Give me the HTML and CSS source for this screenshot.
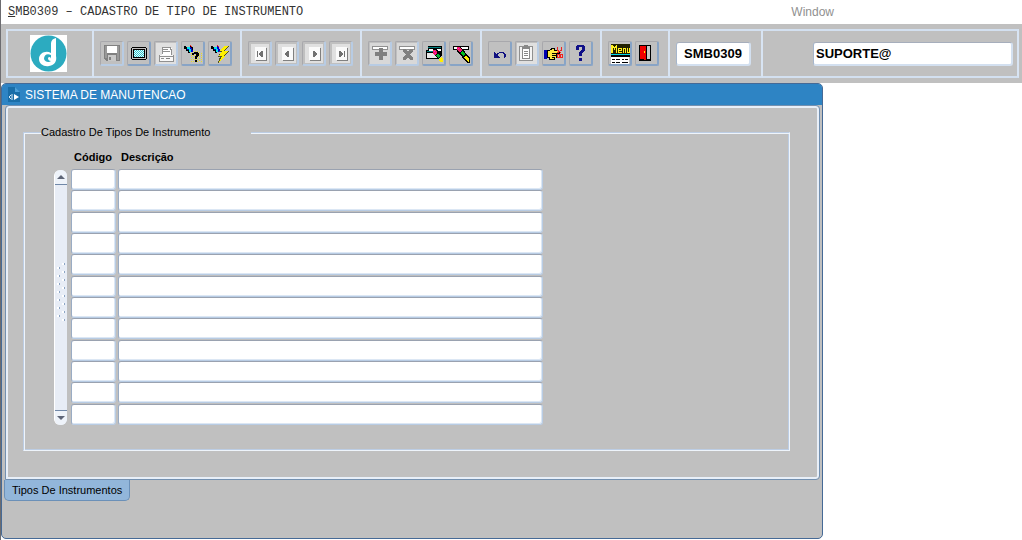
FILE: index.html
```html
<!DOCTYPE html>
<html lang="pt-BR">
<head>
	<meta charset="UTF-8">
	<title>SMB0309 – CADASTRO DE TIPO DE INSTRUMENTO</title>
	<link rel="stylesheet" href="styles.css">
</head>
<body>
	<div id="app">
		<div id="menubar">
			<h1><u>S</u>MB0309 – CADASTRO DE TIPO DE INSTRUMENTO</h1>
			<a href="#" class="menu-window">Window</a>
		</div>

		<div id="toolbar">
			<div class="group logo">
				<svg width="37" height="37" viewBox="0 0 37 37">
					<rect width="37" height="37" fill="#fff"/>
					<circle cx="18.500" cy="18.500" r="18" fill="#2cabc0"/>
					<path d="M26 3C22 4 21 6 21 10V18C16 15 9 18 9 24C9 29 14 32 19 31C25 30 27 26 26 21Z" fill="#fff"/>
					<path d="M21 20C17 18 14 20 14 24C15 27 19 28 21 26C19 26 18 25 18 23C19 21 21 22 21 24Z" fill="#2cabc0"/>
				</svg>
			</div>
			<div class="group">
				<button type="button" class="off" title="Salvar"><svg viewBox="2 2 20 21">
					<path d="M4 4H20V20H6L4 18Z" fill="#808080"/>
					<path d="M5 5h2v12h-2zM17 5h2v14h-2z" fill="#999"/>
					<path d="M7 5H17V12H7Z" fill="#fff"/>
					<path d="M8 14H16V20H8Z" fill="#c8c8c8"/>
					<path d="M9 16h2v3h-2z" fill="#808080"/>
				</svg></button>
				<button type="button" title="Tela"><svg viewBox="2 2 20 21">
					<path d="M5 6H19V7H20V18H19V19H5V18H4V7H5Z" fill="#000"/>
					<path d="M5 7H19V18H5Z" fill="#c0c0c0"/>
					<path d="M6 8H18V17H6Z" fill="#000"/>
					<path d="M7 9H17V16H7Z" fill="#e8ffff"/>
					<path d="M7 9h1v1h-1zM9 9h1v1h-1zM11 9h1v1h-1zM13 9h1v1h-1zM15 9h1v1h-1zM8 10h1v1h-1zM10 10h1v1h-1zM12 10h1v1h-1zM14 10h1v1h-1zM16 10h1v1h-1zM7 11h1v1h-1zM9 11h1v1h-1zM11 11h1v1h-1zM13 11h1v1h-1zM15 11h1v1h-1zM8 12h1v1h-1zM10 12h1v1h-1zM12 12h1v1h-1zM14 12h1v1h-1zM16 12h1v1h-1zM7 13h1v1h-1zM9 13h1v1h-1zM11 13h1v1h-1zM13 13h1v1h-1zM15 13h1v1h-1zM8 14h1v1h-1zM10 14h1v1h-1zM12 14h1v1h-1zM14 14h1v1h-1zM16 14h1v1h-1zM7 15h1v1h-1zM9 15h1v1h-1zM11 15h1v1h-1zM13 15h1v1h-1zM15 15h1v1h-1z" fill="#30c4cc"/>
				</svg></button>
				<button type="button" class="off" title="Imprimir"><svg viewBox="2 2 20 21">
					<rect x="2" y="2" width="20" height="21" fill="#e0e0e0"/>
					<path d="M8 6H16L18 8V14H8Z" fill="#fff"/>
					<path d="M8 13V6H16V8H17V14M9 8.500H14M9 10.500H16" stroke="#909090" fill="none"/>
					<path d="M5 14H19V20H5Z" fill="#f8f8f8"/>
					<path d="M5 15.500H19M5 14V20H19V14M7 17.500H10" stroke="#909090" fill="none"/>
					<path d="M12 17h4v1h-4z" fill="#808080"/>
				</svg></button>
				<button type="button" title="Entrar consulta"><svg viewBox="2 2 20 21">
					<path d="M10.500 10V21M12.500 10V21M14.500 10V21M16.500 10V21M18.500 11V21M20.500 12V21" stroke="#e8e020" stroke-dasharray="1 1"/>
					<path d="M3 5H5V6H7V8H8V10H9V12H7V10H5V8H3Z" fill="#000"/>
					<path d="M6 6H9V5H11V8H12V11H8V9H6Z" fill="#0000d0"/>
					<path d="M6 6h3v2h1v3h-2v-3h-2z" fill="#00e8f0"/>
					<path d="M9 4h1v1h1v1h1v3h-1v-2h-1v-1h-1z" fill="#000"/>
					<path d="M9 4h1v1h1v1h-1v-1h-1z" fill="#f02020"/>
					<path d="M12 12H13V11H17V12H18V15H17V16H16V18H14V15H15V13H13V14H11V12ZM14 19H16V21H14Z" fill="#000"/>
				</svg></button>
				<button type="button" title="Executar consulta"><svg viewBox="2 2 20 21">
					<path d="M3 5H5V6H7V8H8V10H9V12H7V10H5V8H3Z" fill="#000"/>
					<path d="M6 6H9V5H11V8H12V11H8V9H6Z" fill="#0000d0"/>
					<path d="M6 6h3v2h1v3h-2v-3h-2z" fill="#00e8f0"/>
					<path d="M9 4h1v1h1v1h-1v-1h-1z" fill="#f02020"/>
					<path d="M16 5H21L17 10H21L16 15H18L10 22L12 16H10L13 11H11Z" fill="#505020"/>
					<path d="M16 5H20L16 10H20L15 15H17L11 21L14 15H11L14 10H12Z" fill="#fff000"/>
				</svg></button>
			</div>
			<div class="group nav">
				<button type="button" class="off" title="Primeiro"><svg viewBox="2 2 20 21">
					<rect x="3" y="3" width="18" height="19" fill="#e0e0e0"/>
					<path d="M8 7H19V20H8Z" fill="#808080"/><path d="M7 6H18V19H7Z" fill="#fafafa"/>
					<path d="M9 10h1v6h-1zM14 10h1v6h-2v-1h-1v-1h-1v-2h1v-1h1v-1z" fill="#707070"/>
				</svg></button>
				<button type="button" class="off" title="Anterior"><svg viewBox="2 2 20 21">
					<rect x="3" y="3" width="18" height="19" fill="#e0e0e0"/>
					<path d="M8 7H19V20H8Z" fill="#808080"/><path d="M7 6H18V19H7Z" fill="#fafafa"/>
					<path d="M13 10h1v6h-2v-1h-1v-1h-1v-2h1v-1h1v-1z" fill="#707070"/>
				</svg></button>
				<button type="button" class="off" title="Próximo"><svg viewBox="2 2 20 21">
					<rect x="3" y="3" width="18" height="19" fill="#e0e0e0"/>
					<path d="M8 7H19V20H8Z" fill="#808080"/><path d="M7 6H18V19H7Z" fill="#fafafa"/>
					<path d="M11 10h2v1h1v1h1v2h-1v1h-1v1h-2z" fill="#707070"/>
				</svg></button>
				<button type="button" class="off" title="Último"><svg viewBox="2 2 20 21">
					<rect x="3" y="3" width="18" height="19" fill="#e0e0e0"/>
					<path d="M8 7H19V20H8Z" fill="#808080"/><path d="M7 6H18V19H7Z" fill="#fafafa"/>
					<path d="M10 10h2v1h1v1h1v2h-1v1h-1v1h-2zM15 10h1v6h-1z" fill="#707070"/>
				</svg></button>
			</div>
			<div class="group">
				<button type="button" class="off" title="Inserir registro"><svg viewBox="2 2 20 21">
					<rect x="2" y="2" width="20" height="21" fill="#d8d8d8"/>
					<path d="M4.500 5.500H19.500V8.500H4.500Z" fill="#fff" stroke="#909090"/>
					<path d="M11 7h4v4h4v4h-4v4h-4v-4h-4v-4h4z" fill="#808080"/>
				</svg></button>
				<button type="button" class="off" title="Excluir registro"><svg viewBox="2 2 20 21">
					<rect x="2" y="2" width="20" height="21" fill="#d8d8d8"/>
					<path d="M4.500 5.500H19.500V8.500H4.500Z" fill="#fff" stroke="#909090"/>
					<path d="M8 8h3v1h1v1h2v-1h1v-1h3v3h-1v1h-1v1h-1v1h1v1h1v1h1v3h-3v-1h-1v-1h-2v1h-1v1h-3v-3h1v-1h1v-1h1v-1h-1v-1h-1v-1h-1z" fill="#808080"/>
				</svg></button>
				<button type="button" title="Limpar bloco"><svg viewBox="2 2 20 21">
					<path d="M6 5H20V14H17V18H4V9H6Z" fill="#000"/>
					<path d="M6 6H19V7H6Z" fill="#008080"/><path d="M7 8H19V10H7Z" fill="#fff"/>
					<path d="M5 10H15V11H5Z" fill="#008080"/><path d="M5 12H16V17H5Z" fill="#e8e8e8"/>
					<path d="M11 8H15L20 15L16 18L11 13Z" fill="#000"/>
					<path d="M11 9H14V10H15V12L13 14L11 13Z" fill="#f02060"/>
					<path d="M14 14L16 12L18 15L16 17Z" fill="#00b030"/>
					<path d="M12 10h1v1h-1zM13 12h1v1h-1z" fill="#f0f"/>
					<path d="M17 18L19 16L21 18V21H18Z" fill="#ffee00"/>
				</svg></button>
				<button type="button" title="Limpar registro"><svg viewBox="2 2 20 21">
					<path d="M4.500 5.500H19.500V8.500H4.500Z" fill="#fff" stroke="#000"/>
					<path d="M8 6H12L21 17V22H18L8 10Z" fill="#000"/>
					<path d="M8 6H11L13 9L11 12L8 9Z" fill="#f02060"/>
					<path d="M9 7h1v1h-1zM11 10h1v1h-1z" fill="#f0f"/>
					<path d="M11 12L13 10L16 13L14 15Z" fill="#00c020"/>
					<path d="M15 16L17 14L20 18V21H19Z" fill="#ffee00"/>
				</svg></button>
			</div>
			<div class="group">
				<button type="button" title="Desfazer"><svg viewBox="2 2 20 21">
					<path d="M6 11V17H12L10 15V13H11V12H15V13H16V17H17V16H18V13H17V12H16V11H11V12H9V13H8Z" fill="#101080"/>
				</svg></button>
				<button type="button" class="off" title="Lista de valores"><svg viewBox="2 2 20 21">
					<rect x="2" y="2" width="20" height="21" fill="#e0e0e0"/>
					<path d="M4.500 5.500H17.500V19.500H4.500Z" fill="#f4f4f4" stroke="#909090"/>
					<path d="M7.500 7.500H14.500V17.500H7.500Z" fill="#fff" stroke="#888"/>
					<path d="M9 4h4v2h2v2h-8v-2h2z" fill="#888"/>
					<path d="M9 10.500H13M9 12.500H13M9 14.500H13" stroke="#888"/>
				</svg></button>
				<button type="button" title="Apontar"><svg viewBox="2 2 20 21">
					<path d="M2 9H5V18H2Z" fill="#0000b0"/>
					<path d="M5 9H8V8H9V7H13V9H15V10H18V13H15V17H13V19H7V17H5Z" fill="#000"/>
					<path d="M6 10H8V9H10V8H12V10H17V12H14V17H12V18H8V16H6Z" fill="#ffe840"/>
					<path d="M10 12.500H14M10 14.500H14M10 16.500H13" stroke="#000"/>
					<path d="M15.500 6V9L19 12M19.500 6V9L15 12M15.500 13.500H17.500V16.500H15.500ZM18.500 13.500H20.500V16.500H18.500Z" fill="none" stroke="#f02020"/>
				</svg></button>
				<button type="button" title="Ajuda"><svg viewBox="2 2 20 21">
					<path d="M7 5H8V4H15V5H16V10H15V11H14V12H13V15H10V11H11V10H12V9H13V6H10V9H7ZM10 17H13V20H10Z" fill="#101088"/>
				</svg></button>
			</div>
			<div class="group">
				<button type="button" title="Menu"><svg viewBox="2 2 20 21">
					<path d="M3 3H22V13H3Z" fill="#202000"/>
					<path d="M3 4h2v1h1v1h1v-1h1v-1h1v8h-1v-5h-1v2h-1v-2h-1v5h-2z" fill="#fff020"/>
					<path d="M10 7h4v3h-3v1h3v1h-4zM11 8v1h2v-1zM15 7h3v5h-1v-4h-1v4h-1zM19 7h1v4h1v-4h1v5h-3z" fill="#fff020" fill-rule="evenodd"/>
					<path d="M3 13H22V14H3Z" fill="#00d8e8"/><path d="M3 14H22V16H3Z" fill="#000"/>
					<path d="M3 16H21V23H3Z" fill="#fff"/>
					<path d="M4 18.500H7M8 18.500H12M14 18.500H16M17 18.500H20M4 21.500H7M8 21.500H12M14 21.500H20" stroke="#000"/>
				</svg></button>
				<button type="button" title="Sair"><svg viewBox="2 2 20 21">
					<path d="M4 4H16V20H4Z" fill="#000"/>
					<path d="M12 5H15V18H12Z" fill="#c8c8c8"/>
					<path d="M5 5H11V19H9V18H5Z" fill="#f00000"/>
					<path d="M9 10h1v2h-1z" fill="#ffee00"/>
				</svg></button>
			</div>
			<div class="group code"><input type="text" value="SMB0309" aria-label="Programa"></div>
			<div class="group user"><input type="text" value="SUPORTE@" aria-label="Usuário"></div>
		</div>

		<div id="window">
			<div class="titlebar">
				<svg width="12" height="15" viewBox="0 0 12 15">
					<path d="M0 0H7L12 5V15H0Z" fill="#1a6ea8"/>
					<path d="M7 0L12 5H7Z" fill="#4da0d8"/>
					<path d="M6 7L11 10L6 13Z" fill="#fff"/>
					<path d="M5 8H3L1 10L3 12H5M3 10H5" fill="none" stroke="#d8ecfa"/>
				</svg>
				<h2>SISTEMA DE MANUTENCAO</h2>
			</div>
			<div class="panel">
				<fieldset>
					<legend>Cadastro De Tipos De Instrumento</legend>
					<div class="records">
						<div class="scroll">
							<button type="button" class="up" aria-label="Subir"></button>
							<svg class="grip" width="8" height="60" viewBox="0 0 8 60">
								<path d="M1 6V60" stroke="#fff" stroke-width="2" stroke-dasharray="2 6"/>
								<path d="M6 2V60" stroke="#fff" stroke-width="2" stroke-dasharray="2 6"/>
								<path d="M2.500 6V60" stroke="#8ba4c4" stroke-dasharray="2 6"/>
								<path d="M7.500 2V60" stroke="#8ba4c4" stroke-dasharray="2 6"/>
							</svg>
							<button type="button" class="down" aria-label="Descer"></button>
						</div>
						<table>
							<thead>
								<tr><th id="cod">Código</th><th id="desc">Descrição</th></tr>
							</thead>
							<tbody>
								<tr><td><input type="text" aria-labelledby="cod"></td><td><input type="text" aria-labelledby="desc"></td></tr>
								<tr><td><input type="text" aria-labelledby="cod"></td><td><input type="text" aria-labelledby="desc"></td></tr>
								<tr><td><input type="text" aria-labelledby="cod"></td><td><input type="text" aria-labelledby="desc"></td></tr>
								<tr><td><input type="text" aria-labelledby="cod"></td><td><input type="text" aria-labelledby="desc"></td></tr>
								<tr><td><input type="text" aria-labelledby="cod"></td><td><input type="text" aria-labelledby="desc"></td></tr>
								<tr><td><input type="text" aria-labelledby="cod"></td><td><input type="text" aria-labelledby="desc"></td></tr>
								<tr><td><input type="text" aria-labelledby="cod"></td><td><input type="text" aria-labelledby="desc"></td></tr>
								<tr><td><input type="text" aria-labelledby="cod"></td><td><input type="text" aria-labelledby="desc"></td></tr>
								<tr><td><input type="text" aria-labelledby="cod"></td><td><input type="text" aria-labelledby="desc"></td></tr>
								<tr><td><input type="text" aria-labelledby="cod"></td><td><input type="text" aria-labelledby="desc"></td></tr>
								<tr><td><input type="text" aria-labelledby="cod"></td><td><input type="text" aria-labelledby="desc"></td></tr>
								<tr><td><input type="text" aria-labelledby="cod"></td><td><input type="text" aria-labelledby="desc"></td></tr>
							</tbody>
						</table>
					</div>
				</fieldset>
			</div>
			<button type="button" class="tab">Tipos De Instrumentos</button>
		</div>
	</div>
</body>
</html>
```
FILE: styles.css
```css
*{margin:0;padding:0;box-sizing:border-box;}
body{
	background: #fff;
	color: #000;
	font-family: "Liberation Sans",Arial,sans-serif;
	font-size: 11px;
}
#app{
	display: flex;
	flex-direction: column;
	min-height: 100vh;
	padding-bottom: 1px;
	border-left: 1px solid #6c6c70;
}

/* menu */
#menubar{
	display: flex;
	align-items: center;
	justify-content: space-between;
	height: 24px;
	padding: 0 188px 0 7px;
}
#menubar h1{
	font: 12px "Liberation Mono","Courier New",monospace;
	color: #333;
}
.menu-window{
	font-size: 12px;
	color: #909090;
	text-decoration: none;
}

/* toolbar */
#toolbar{
	display: grid;
	grid-template-columns: 88px 148px 120px 120px 120px 68px 93px 1fr;
	height: 59px;
	padding: 5px 3px 5px 5px;
	background: #c0c0c0;
}
.group{
	display: flex;
	align-items: center;
	gap: 3px;
	padding-left: 6px;
	border-top: 2px solid #d3e0f0;
	border-bottom: 2px solid #d3e0f0;
	border-right: 2px solid #d8e4f3;
}
.logo{
	justify-content: center;
	border-left: 2px solid #d8e4f3;
	padding: 0 4px 0 0;
}
.group button{
	width: 24px;
	height: 25px;
	background: #c0c0c0;
	border: 2px solid;
	border-color: #a8a8ac #88a4c6 #88a4c6 #a8a8ac;
	border-width: 1px 2px 2px 1px;
	border-radius: 2px;
}
.group button.off{
	border-color: #a8a8ac #b8cce4 #b8cce4 #a8a8ac;
}
.group button svg{
	display: block;
	width: 20px;
	height: 21px;
	margin: 1px 0 0 1px;
	shape-rendering: crispEdges;
}
.group input{
	height: 24px;
	border: 2px solid;
	border-color: #a6aebc #d3e0f0 #d3e0f0 #a6b6cc;
	border-width: 1px 2px 2px 1px;
	border-radius: 3px;
	background: #fff;
	font: bold 13px "Liberation Sans",Arial,sans-serif;
}
.code input{
	width: 75px;
	text-align: center;
}
.user{
	padding: 0 4px 0 50px;
}
.user input{
	width: 100%;
	padding-left: 2px;
}

/* form window */
#window{
	flex: 1;
	width: calc(100% - 199px);
	background: #c0c0c0;
	border: 1px solid #466a96;
	border-radius: 5px;
	overflow: hidden;
}
.titlebar{
	display: flex;
	align-items: center;
	gap: 5px;
	height: 21px;
	padding-left: 6px;
	background: #2e84c4;
}
.titlebar h2{
	font-size: 12px;
	font-weight: normal;
	color: #fff;
}
.panel{
	height: 375px;
	margin: 0 2px 0 3px;
	padding: 19px 29px 27px 17px;
	border: 1px solid #7390b0;
	border-radius: 4px 4px 4px 0;
	box-shadow: inset 0 0 0 2px #e8eff8;
}
fieldset{
	height: 326px;
	padding: 1px;
	border: 1px solid;
	border-color: #bccde4 #eef4fb #eef4fb #bccde4;
	box-shadow: inset 1px 1px 0 #eef4fb, inset -1px -1px 0 #bccde4;
}
legend{
	width: 210px;
	height: 14px;
	margin-left: 16px;
	line-height: 14px;
	background: #c0c0c0;
}
.records{
	display: flex;
	align-items: flex-end;
	gap: 4px;
	padding: 7px 0 0 29px;
}

.scroll{
	display: flex;
	flex-direction: column;
	align-items: center;
	width: 13px;
	height: 255px;
	background: #e8edf6;
	border-left: 1px solid #fff;
	border-radius: 6px;
}
.scroll button{
	width: 100%;
	height: 15px;
	border: 0;
	background: #eef3fa;
}
.scroll .up{
	border-bottom: 1px solid #7088a8;
	border-radius: 6px 6px 0 0;
}
.scroll .down{
	margin-top: auto;
	border-top: 1px solid #7088a8;
	border-radius: 0 0 6px 6px;
}
.scroll button::before{
	content: "";
	display: block;
	width: 0;
	margin: 0 auto;
	border: 4px solid transparent;
}
.scroll .up::before{
	border-top: 0;
	border-bottom-color: #5e6678;
}
.scroll .down::before{
	border-bottom: 0;
	border-top-color: #5e6678;
}
.grip{
	margin-top: 76px;
	shape-rendering: crispEdges;
}

table{
	border-collapse: collapse;
	table-layout: fixed;
	width: 472px;
}
th{
	height: 22px;
	padding: 3px 0 0 3px;
	font-size: 11px;
	line-height: 14px;
	text-align: left;
	vertical-align: top;
}
th:first-child{width: 47px;}
td{height: 21px;}
tr:nth-child(3n) td{height: 22px;}
td:first-child{padding-right: 2px;}
td input{
	display: block;
	width: 100%;
	height: 21px;
	background: #fff;
	border: 1px solid;
	border-color: #9aa2b0 #b8cce4 #b8cce4 #9aacc4;
	border-radius: 3px;
	box-shadow: inset -1px -1px 0 #dce7f4;
}

.tab{
	display: block;
	height: 21px;
	margin-left: 2px;
	padding: 0 7px;
	background: #92b6da;
	border: 1px solid #6b90b8;
	border-top: 0;
	border-radius: 0 0 5px 5px;
	font: 11px "Liberation Sans",Arial,sans-serif;
}
```
